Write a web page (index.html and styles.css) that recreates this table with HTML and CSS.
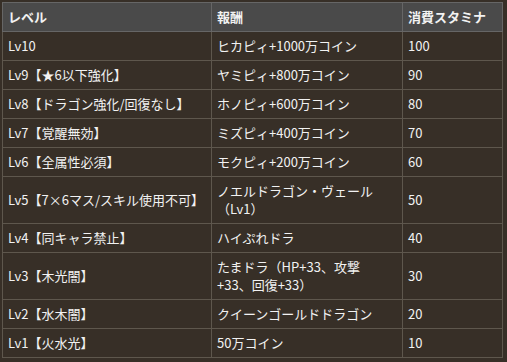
FILE: index.html
```html
<!DOCTYPE html>
<html lang="ja">
<head>
<meta charset="utf-8">
<link rel="stylesheet" href="styles.css">
</head>
<body>
<table class="levels">
  <colgroup>
    <col class="c-level">
    <col class="c-reward">
    <col class="c-stamina">
  </colgroup>
  <thead>
    <tr><th>レベル</th><th>報酬</th><th>消費スタミナ</th></tr>
  </thead>
  <tbody>
    <tr><td>Lv10</td><td>ヒカピィ+1000万コイン</td><td>100</td></tr>
    <tr><td>Lv9【★6以下強化】</td><td>ヤミピィ+800万コイン</td><td>90</td></tr>
    <tr><td>Lv8【ドラゴン強化/回復なし】</td><td>ホノピィ+600万コイン</td><td>80</td></tr>
    <tr><td>Lv7【覚醒無効】</td><td>ミズピィ+400万コイン</td><td>70</td></tr>
    <tr><td>Lv6【全属性必須】</td><td>モクピィ+200万コイン</td><td>60</td></tr>
    <tr><td>Lv5【7×6マス/スキル使用不可】</td><td>ノエルドラゴン・ヴェール<br>（Lv1）</td><td>50</td></tr>
    <tr><td>Lv4【同キャラ禁止】</td><td>ハイぷれドラ</td><td>40</td></tr>
    <tr><td>Lv3【木光闇】</td><td>たまドラ（HP+33、攻撃<br>+33、回復+33）</td><td>30</td></tr>
    <tr><td>Lv2【水木闇】</td><td>クイーンゴールドドラゴン</td><td>20</td></tr>
    <tr><td>Lv1【火水光】</td><td>50万コイン</td><td>10</td></tr>
  </tbody>
</table>
</body>
</html>
```
FILE: styles.css
```css
html, body {
  background: #372f27;
}
body {
  margin: 2px;
  font-family: "Noto Sans CJK JP", "Noto Sans", sans-serif;
  font-size: 13px;
  line-height: 18px;
  color: #f2f2f2;
}
.levels {
  border-collapse: collapse;
  width: 500px;
  table-layout: fixed;
}
.c-level { width: 209px; }
.c-reward { width: 191px; }
.c-stamina { width: 100px; }
.levels th,
.levels td {
  border: 1px solid #5e574d;
  padding: 5px 5px 5px 5px;
  text-align: left;
  vertical-align: middle;
}
.levels th {
  background: #4a4a4a;
  border-color: #666;
  font-weight: 700;
}
```
